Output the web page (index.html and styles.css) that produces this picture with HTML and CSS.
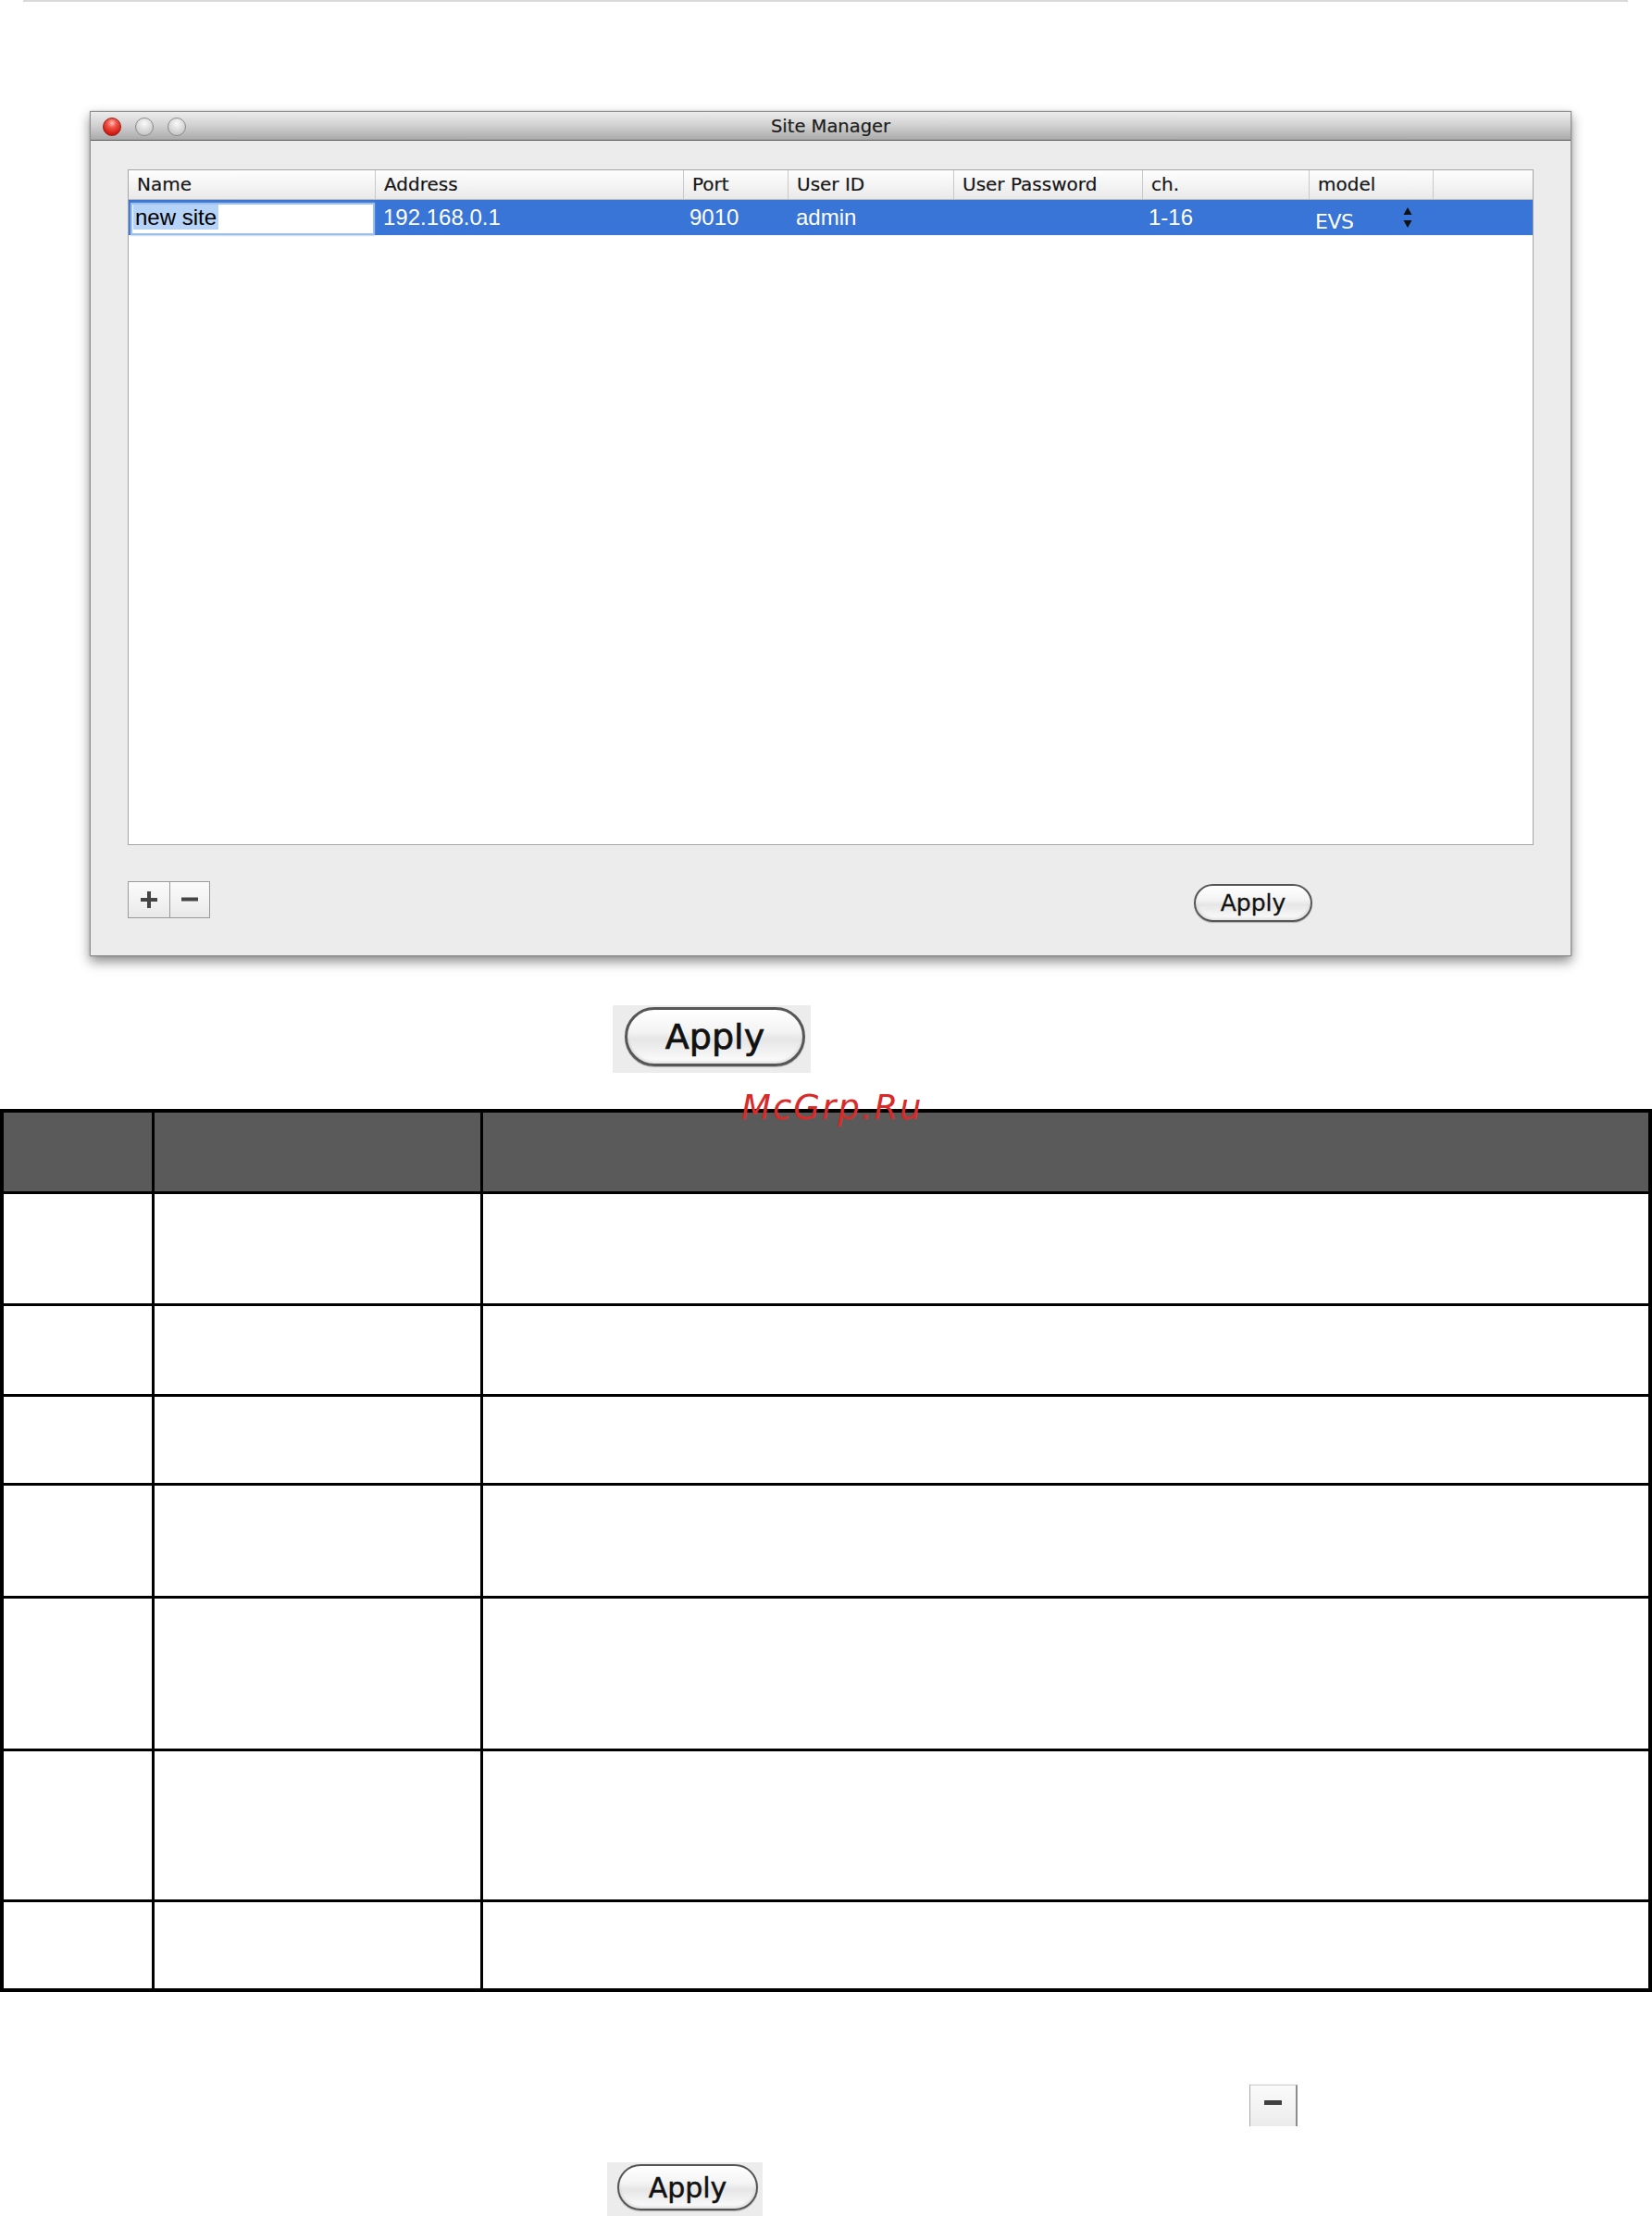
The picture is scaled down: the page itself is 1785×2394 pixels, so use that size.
FILE: index.html
```html
<!DOCTYPE html>
<html lang="en">
<head>
<meta charset="utf-8">
<title>Site Manager</title>
<link rel="stylesheet" href="styles.css">
</head>
<body>
<div class="rule"></div>

<div class="window">
  <div class="titlebar">
    <div class="lights">
      <span class="light red"></span>
      <span class="light"></span>
      <span class="light"></span>
    </div>
    <div class="title">Site Manager</div>
    <div></div>
  </div>
  <div class="wbody">
    <div class="list">
      <div class="lhead">
        <div class="hc">Name</div>
        <div class="hc">Address</div>
        <div class="hc">Port</div>
        <div class="hc">User ID</div>
        <div class="hc">User Password</div>
        <div class="hc">ch.</div>
        <div class="hc">model</div>
        <div class="hc last"></div>
      </div>
      <div class="lrow">
        <div class="dc namecell"><span class="edit"><span class="hl">new site</span></span></div>
        <div class="dc">192.168.0.1</div>
        <div class="dc port">9010</div>
        <div class="dc">admin</div>
        <div class="dc"></div>
        <div class="dc port">1-16</div>
        <div class="dc evs"><span class="evst">EVS</span>
          <svg class="stepper" width="10" height="22" viewBox="0 0 10 22"><polygon points="5,0 9.5,8 0.5,8" fill="#111"/><polygon points="0.5,14 9.5,14 5,22" fill="#111"/></svg>
        </div>
        <div class="dc"></div>
      </div>
    </div>
    <div class="footer">
      <div class="pm">
        <div class="pmb plus"><svg width="18" height="18" viewBox="0 0 18 18"><rect x="7" y="0" width="4" height="18" fill="#454545"/><rect x="0" y="7" width="18" height="4" fill="#454545"/></svg></div>
        <div class="pmb minus"><svg width="18" height="5" viewBox="0 0 18 5"><rect x="0" y="0.5" width="18" height="4" fill="#454545"/></svg></div>
      </div>
      <div class="aqua small">Apply</div>
    </div>
  </div>
</div>

<div class="shot big"><div class="aqua bigbtn">Apply</div></div>

<div class="doc">
  <div class="c h"></div><div class="c h"></div><div class="c h"></div>
  <div class="c"></div><div class="c"></div><div class="c"></div>
  <div class="c"></div><div class="c"></div><div class="c"></div>
  <div class="c"></div><div class="c"></div><div class="c"></div>
  <div class="c"></div><div class="c"></div><div class="c"></div>
  <div class="c"></div><div class="c"></div><div class="c"></div>
  <div class="c"></div><div class="c"></div><div class="c"></div>
  <div class="c"></div><div class="c"></div><div class="c"></div>
</div>

<div class="watermark">McGrp.Ru</div>

<div class="minus-wrap">
  <div class="minusbtn"><svg width="19" height="5" viewBox="0 0 19 5"><rect x="0" y="0" width="19" height="5" rx="0.5" fill="#404040"/></svg></div>
</div>

<div class="shot bottom"><div class="aqua botbtn">Apply</div></div>
</body>
</html>
```

FILE: styles.css
```css
html, body {
  margin: 0;
  padding: 0;
  background: #ffffff;
  overflow: hidden;
}

body {
  position: relative;
  font-family: "DejaVu Sans", "Liberation Sans", sans-serif;
  color: #111;
}

.rule {
  margin-left: 25px;
  width: 1734px;
  height: 2px;
  background: #d9d9d9;
}

/* ---------- window ---------- */
.window {
  margin: 118px 0 0 97px;
  width: 1601px;
  height: 913px;
  box-sizing: border-box;
  border: 1px solid #8e8e8e;
  background: #ececec;
  box-shadow: 0 6px 12px rgba(0, 0, 0, 0.45), 0 0 2px rgba(0, 0, 0, 0.25);
  display: flex;
  flex-direction: column;
}

.titlebar {
  height: 31px;
  box-sizing: border-box;
  border-bottom: 1px solid #575757;
  background: linear-gradient(#ececec 0%, #d3d3d3 45%, #b9b9b9 80%, #a9a9a9 100%);
  display: grid;
  grid-template-columns: 1fr auto 1fr;
  align-items: center;
}

.lights {
  display: flex;
  gap: 15px;
  padding-left: 13px;
}

.light {
  width: 20px;
  height: 20px;
  box-sizing: border-box;
  border-radius: 50%;
  border: 1px solid #8a8a8a;
  background: radial-gradient(circle at 50% 30%, #fafafa 0%, #d6d6d6 55%, #b8b8b8 100%);
}

.light.red {
  border-color: #9b1b14;
  background: radial-gradient(circle at 50% 28%, #ffc2b8 0%, #f0574c 30%, #d41f14 70%, #a80c06 100%);
}

.title {
  font-size: 19.5px;
  color: #1c1c1c;
  line-height: 30px;
  padding-top: 1px;
  -webkit-text-stroke: 0.2px #1c1c1c;
}

.wbody {
  flex: 1;
  padding: 31px 40px 0 40px;
  display: flex;
  flex-direction: column;
}

.list {
  height: 730px;
  box-sizing: border-box;
  border: 1px solid #a6a6a6;
  background: #ffffff;
}

.lhead,
.lrow {
  display: grid;
  grid-template-columns: 267px 333px 113px 179px 204px 180px 134px 1fr;
}

.lhead {
  height: 32px;
  box-sizing: border-box;
  border-bottom: 1px solid #bababa;
  background: linear-gradient(#fefefe 0%, #f4f4f4 50%, #e9e9e9 100%);
}

.hc {
  border-right: 1px solid #c9c9c9;
  padding-left: 9px;
  font-size: 20px;
  line-height: 31px;
  color: #161616;
  white-space: nowrap;
  -webkit-text-stroke: 0.2px #161616;
}

.hc.last {
  border-right: none;
}

.lrow {
  height: 38px;
  background: #3875d7;
  color: #ffffff;
}

.dc {
  font-family: "Liberation Sans", Arial, sans-serif;
  font-size: 24px;
  line-height: 38px;
  padding-left: 8px;
  white-space: nowrap;
}

.dc.port {
  padding-left: 6px;
}

.namecell {
  padding: 3px 1px 0 2px;
}

.edit {
  display: block;
  height: 35px;
  box-sizing: border-box;
  border: 2px solid #9dbfe9;
  box-shadow: 0 0 2px #6f9fe0;
  background: #ffffff;
  color: #000000;
  padding-left: 1px;
  line-height: 27px;
}

.hl {
  display: inline-block;
  height: 27px;
  line-height: 27px;
  padding: 0 2px 0 2px;
  background: #b5d3f6;
  vertical-align: top;
}

.evs {
  display: flex;
  align-items: center;
  justify-content: space-between;
  padding-left: 6px;
  padding-right: 23px;
}

.evst {
  font-family: "DejaVu Sans", sans-serif;
  font-size: 22px;
  line-height: 22px;
  padding-top: 9px;
  letter-spacing: -0.5px;
}

.stepper {
  display: block;
}

.footer {
  display: flex;
  justify-content: space-between;
  align-items: flex-start;
  margin-top: 39px;
}

.pm {
  display: flex;
  border: 1px solid #9a9a9a;
}

.pmb {
  height: 38px;
  display: flex;
  align-items: center;
  justify-content: center;
  background: linear-gradient(#fbfbfb 0%, #f1f1f1 60%, #e8e8e8 100%);
}

.pmb.plus {
  width: 44px;
  border-right: 1px solid #9a9a9a;
}

.pmb.minus {
  width: 42px;
  padding-bottom: 2px;
  box-sizing: border-box;
}

/* ---------- aqua buttons ---------- */
.aqua {
  display: flex;
  align-items: center;
  justify-content: center;
  box-sizing: border-box;
  border-radius: 999px;
  border: 2px solid #565656;
  background: linear-gradient(#ffffff 0%, #f4f4f4 40%, #e6e6e6 55%, #f5f5f5 85%, #ffffff 100%);
  box-shadow: inset 0 -2px 3px rgba(0, 0, 0, 0.12), inset 0 2px 2px rgba(255, 255, 255, 0.9), 0 1px 1px rgba(0, 0, 0, 0.25);
  font-family: "DejaVu Sans", sans-serif;
  color: #111111;
}

.aqua.small {
  width: 128px;
  height: 41px;
  font-size: 25px;
  margin-top: 3px;
  margin-right: 239px;
  -webkit-text-stroke: 0.3px #111111;
}

.shot {
  background: #ececec;
  box-sizing: border-box;
}

.shot.big {
  margin: 53px 0 0 662px;
  width: 214px;
  height: 73px;
  padding: 2px 0 0 13px;
}

.aqua.bigbtn {
  width: 195px;
  height: 64px;
  font-size: 38px;
  border-width: 3px;
  -webkit-text-stroke: 0.7px #111111;
}

/* ---------- document table ---------- */
.doc {
  margin-top: 39px;
  display: grid;
  grid-template-columns: 160px 352px 1fr;
  grid-template-rows: 85px 118px 95px 93px 119px 162px 160px 93px;
  gap: 3px;
  background: #000000;
  border: 4px solid #000000;
}

.c {
  background: #ffffff;
}

.c.h {
  background: #5a5a5a;
}

.watermark {
  position: absolute;
  left: 801px;
  top: 1178px;
  font-family: "DejaVu Sans", sans-serif;
  font-style: italic;
  font-size: 37px;
  line-height: 1;
  letter-spacing: 2px;
  color: #d92a2a;
}

/* ---------- bottom bits ---------- */
.minus-wrap {
  margin: 100px 0 0 1350px;
  width: 52px;
  height: 45px;
}

.minusbtn {
  height: 45px;
  box-sizing: border-box;
  border-left: 1px solid #a8a8a8;
  border-right: 2px solid #8c8c8c;
  border-top: 1px solid #c8c8c8;
  background: linear-gradient(#fafafa 0%, #f2f2f2 60%, #ebebeb 100%);
  display: flex;
  align-items: center;
  justify-content: center;
  padding-bottom: 8px;
}

.shot.bottom {
  margin: 39px 0 0 656px;
  width: 168px;
  height: 58px;
  padding: 2px 0 0 11px;
}

.aqua.botbtn {
  width: 152px;
  height: 50px;
  font-size: 30px;
  border-width: 2px;
  -webkit-text-stroke: 0.5px #111111;
}
```
